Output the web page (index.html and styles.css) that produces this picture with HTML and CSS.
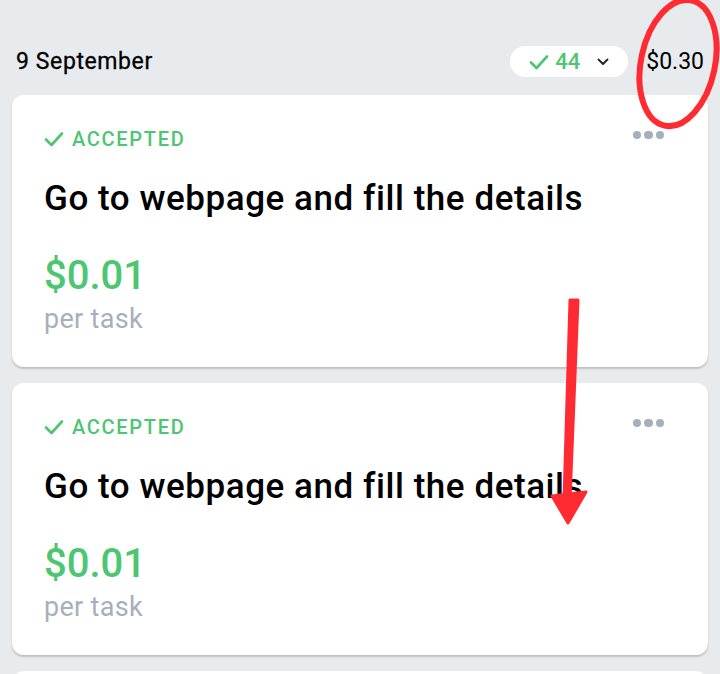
FILE: index.html
```html
<!DOCTYPE html>
<html>
<head>
<meta charset="utf-8">
<link rel="stylesheet" href="styles.css">
</head>
<body>
<div class="page">
  <div class="header">
    <div class="date">9 September</div>
    <div class="right">
      <div class="pill">
        <svg class="pill-check" width="20" height="16" viewBox="0 0 20 16"><path d="M2 8.5 L7.5 14 L18 2.5" fill="none" stroke="#4cc670" stroke-width="2.6" stroke-linecap="round" stroke-linejoin="round"/></svg>
        <span class="count">44</span>
        <svg class="chev" width="12" height="8" viewBox="0 0 12 8"><path d="M1.5 1.5 L6 6 L10.5 1.5" fill="none" stroke="#222" stroke-width="1.8" stroke-linecap="round" stroke-linejoin="round"/></svg>
      </div>
      <div class="total">$0.30</div>
    </div>
  </div>

  <div class="card">
    <div class="status-row">
      <div class="status">
        <svg width="20" height="16" viewBox="0 0 20 16"><path d="M2 8.5 L7.5 14 L18 2.5" fill="none" stroke="#4cc670" stroke-width="2.6" stroke-linecap="round" stroke-linejoin="round"/></svg>
        <span>ACCEPTED</span>
      </div>
      <div class="dots"><i></i><i></i><i></i></div>
    </div>
    <div class="title">Go to webpage and fill the details</div>
    <div class="price">$0.01</div>
    <div class="per">per task</div>
  </div>

  <div class="card">
    <div class="status-row">
      <div class="status">
        <svg width="20" height="16" viewBox="0 0 20 16"><path d="M2 8.5 L7.5 14 L18 2.5" fill="none" stroke="#4cc670" stroke-width="2.6" stroke-linecap="round" stroke-linejoin="round"/></svg>
        <span>ACCEPTED</span>
      </div>
      <div class="dots"><i></i><i></i><i></i></div>
    </div>
    <div class="title">Go to webpage and fill the details</div>
    <div class="price">$0.01</div>
    <div class="per">per task</div>
  </div>

  <div class="card"></div>
</div>

<svg class="annot" width="720" height="674" viewBox="0 0 720 674">
  <ellipse cx="678" cy="63" rx="37" ry="64" transform="rotate(12 678 63)" fill="none" stroke="#fe2b32" stroke-width="6"/>
  <path d="M570 300 L578 300 L570 500 L564 500 Z" fill="#fe2b32" stroke="#fe2b32" stroke-width="3" stroke-linejoin="round"/>
  <path d="M552 496 L586 492 L568 523 Z" fill="#fe2b32" stroke="#fe2b32" stroke-width="3" stroke-linejoin="round"/>
</svg>
</body>
</html>
```
FILE: styles.css
```css
* { box-sizing: border-box; }
html, body { margin: 0; padding: 0; }
body {
  background: #e8ebee;
  font-family: Roboto, "Open Sans", sans-serif;
  width: 720px;
  height: 674px;
  overflow: hidden;
  position: relative;
}
.page {
  padding: 0 12px;
}
.header {
  display: flex;
  align-items: center;
  justify-content: space-between;
  height: 95px;
  padding: 28px 4px 0 4px;
}
.date {
  font-size: 23px;
  font-weight: 400;
  color: #000;
  letter-spacing: 0.6px;
  -webkit-text-stroke: 0.3px #000;
}
.right {
  display: flex;
  align-items: center;
  gap: 18px;
}
.pill {
  display: flex;
  align-items: center;
  background: #fff;
  height: 31px;
  width: 118px;
  border-radius: 16px;
  padding-left: 19px;
}
.pill-check { margin-right: 6px; }
.count {
  color: #4cc670;
  font-size: 22px;
  font-weight: 500;
}
.chev { margin-left: 17px; }
.total {
  font-size: 23px;
  color: #000;
}
.card {
  background: #fff;
  border-radius: 12px;
  box-shadow: 0 2px 2px rgba(0,0,0,0.18);
  height: 272px;
  margin-bottom: 16px;
  padding: 28px 44px 0 32px;
}
.status-row {
  display: flex;
  justify-content: space-between;
  align-items: center;
  height: 32px;
}
.status {
  display: flex;
  align-items: center;
  gap: 8px;
  color: #4cc670;
  font-size: 20px;
  letter-spacing: 1.7px;
  font-weight: 500;
}
.dots {
  display: flex;
  gap: 3px;
  margin-top: -8px;
}
.dots i {
  width: 8.5px;
  height: 8.5px;
  border-radius: 50%;
  background: #a6b0ba;
}
.title {
  margin-top: 24px;
  font-size: 35px;
  font-weight: 500;
  color: #000;
  line-height: 40px;
  letter-spacing: 0.55px;
}
.price {
  margin-top: 33px;
  font-size: 40px;
  color: #4cc670;
  font-weight: 500;
  line-height: 48px;
}
.per {
  margin-top: 3px;
  font-size: 27px;
  color: #a6b0ba;
  line-height: 32px;
  letter-spacing: 0.3px;
}
.annot {
  position: absolute;
  left: 0;
  top: 0;
  pointer-events: none;
}
```
